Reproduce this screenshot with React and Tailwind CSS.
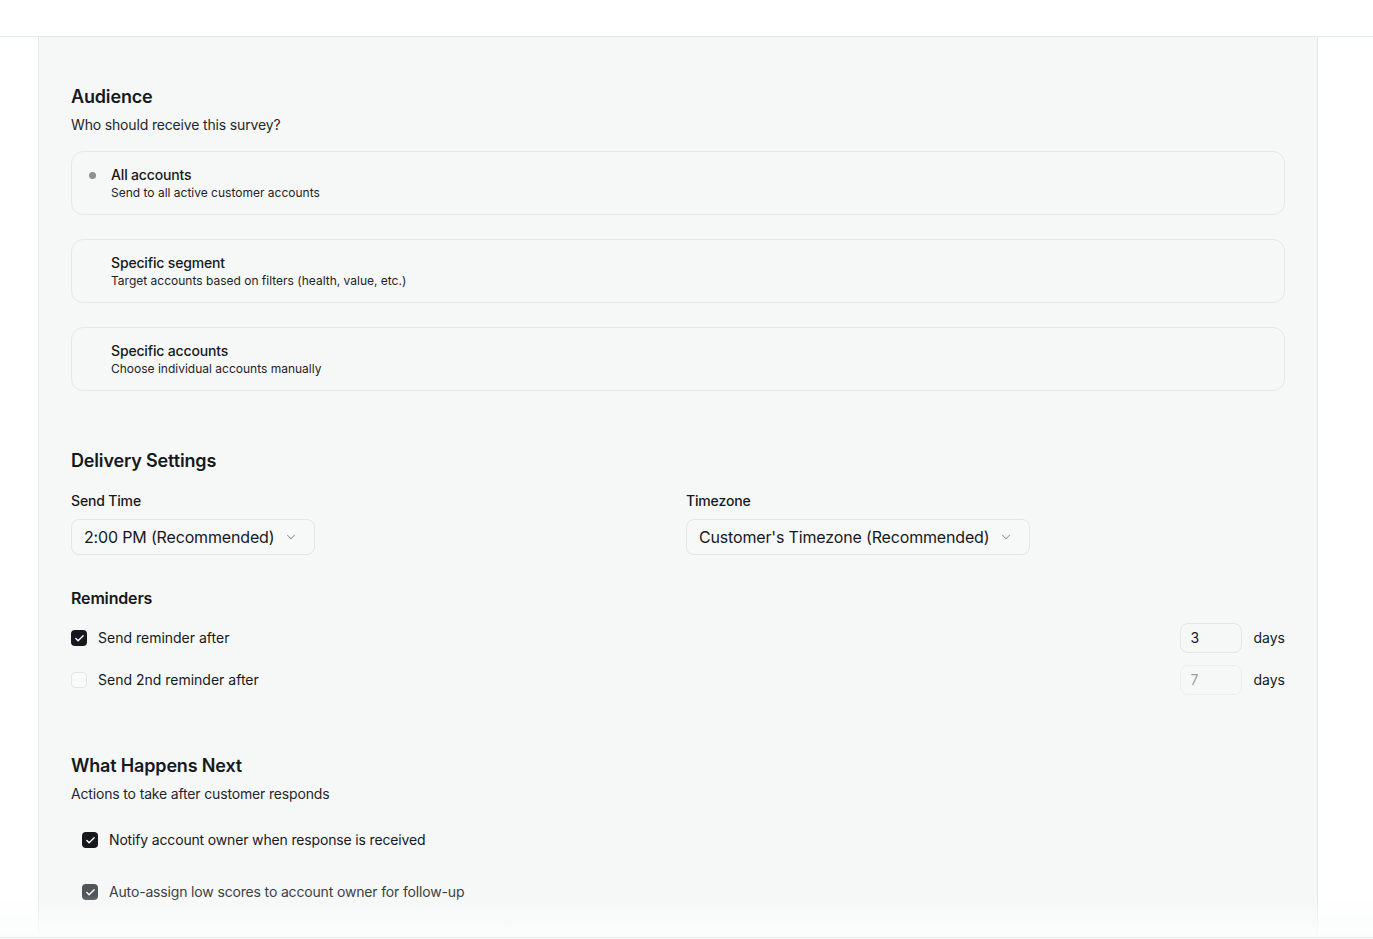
import React from "react";
import { Check, ChevronDown } from "lucide-react";

const audienceOptions = [
  {
    title: "All accounts",
    desc: "Send to all active customer accounts",
    selected: true,
  },
  {
    title: "Specific segment",
    desc: "Target accounts based on filters (health, value, etc.)",
  },
  {
    title: "Specific accounts",
    desc: "Choose individual accounts manually",
  },
];

const Checkbox = ({ checked, muted }) => {
  if (!checked) {
    return (
      <span className="w-4 h-4 shrink-0 rounded-[4px] border border-[#e1e5e8] bg-[#f8fafa]"></span>
    );
  }
  return (
    <span
      className={
        "w-4 h-4 shrink-0 rounded-[4px] flex items-center justify-center " +
        (muted ? "bg-[#50555b]" : "bg-[#15181c]")
      }
    >
      <Check size={11} strokeWidth={3} className="text-white" />
    </span>
  );
};

const Select = ({ value }) => (
  <div className="inline-flex items-center gap-2.5 h-9 pl-3 pr-4 rounded-lg border border-[#e1e6e9] bg-[#f7f9f9] text-base tracking-[-0.01em] text-[#15181c]">
    <span>{value}</span>
    <ChevronDown size={14} strokeWidth={1.75} className="text-[#8b9096]" />
  </div>
);

const ReminderRow = ({ checked, label, days }) => (
  <div className="flex items-center h-[30px]">
    <Checkbox checked={checked} />
    <span className="ml-[11px] text-sm tracking-normal text-[#15181c]">{label}</span>
    <div className="ml-auto flex items-center gap-3">
      <div
        className={
          "w-[62px] h-[30px] rounded-lg pl-[10px] flex items-center text-sm " +
          (checked
            ? "border border-[#e1e6e9] text-[#15181c]"
            : "border border-dotted border-[#e1e6e9] text-[#9a9ea3]")
        }
      >
        {days}
      </div>
      <span className="text-sm tracking-normal text-[#15181c]">days</span>
    </div>
  </div>
);

const App = () => {
  return (
    <div className="min-h-screen bg-white font-['Inter',sans-serif] tracking-[-0.01em] text-[#15181c]">
      <header className="h-[37px] border-b border-[#e3e8eb] bg-white"></header>

      <main className="ml-[38px] w-[1280px] bg-[#f6f8f8] border-x border-[#e3e7ea] px-8 pt-[46px] pb-24">
        {/* Audience */}
        <section>
          <h2 className="text-lg leading-7 font-semibold">Audience</h2>
          <p className="mt-1 text-sm leading-5 text-[#23272b]">
            Who should receive this survey?
          </p>
          <div className="mt-4 space-y-6">
            {audienceOptions.map((opt) => (
              <div
                key={opt.title}
                className="flex items-start gap-[11px] pl-3 py-[13px] rounded-xl border border-[#e3e8eb]"
              >
                <span className="w-4 h-4 mt-0.5 shrink-0 flex items-center justify-center">
                  {opt.selected && (
                    <span className="w-[7px] h-[7px] rounded-full bg-[#8c9095]"></span>
                  )}
                </span>
                <div>
                  <div className="text-sm leading-5 font-medium">{opt.title}</div>
                  <div className="text-xs leading-4 tracking-normal text-[#1e2226]">{opt.desc}</div>
                </div>
              </div>
            ))}
          </div>
        </section>

        {/* Delivery Settings */}
        <section className="mt-14">
          <h2 className="text-lg leading-7 font-semibold">Delivery Settings</h2>
          <div className="mt-4 grid grid-cols-2 gap-4">
            <div>
              <label className="block text-sm leading-5 font-medium">Send Time</label>
              <div className="mt-2">
                <Select value="2:00 PM (Recommended)" />
              </div>
            </div>
            <div>
              <label className="block text-sm leading-5 font-medium">Timezone</label>
              <div className="mt-2">
                <Select value="Customer's Timezone (Recommended)" />
              </div>
            </div>
          </div>

          <h3 className="mt-[31px] text-base leading-6 font-semibold">Reminders</h3>
          <div className="mt-[13px] flex flex-col gap-3">
            <ReminderRow checked label="Send reminder after" days="3" />
            <ReminderRow label="Send 2nd reminder after" days="7" />
          </div>
        </section>

        {/* What Happens Next */}
        <section className="mt-[57px]">
          <h2 className="text-lg leading-7 font-semibold">What Happens Next</h2>
          <p className="mt-1 text-sm leading-5 text-[#23272b]">
            Actions to take after customer responds
          </p>
          <div className="mt-[26px] pl-[11px] flex flex-col gap-8">
            <div className="flex items-center h-5">
              <Checkbox checked />
              <span className="ml-[11px] text-sm">
                Notify account owner when response is received
              </span>
            </div>
            <div className="flex items-center h-5">
              <Checkbox checked muted />
              <span className="ml-[11px] text-sm text-[#3a3e43]">
                Auto-assign low scores to account owner for follow-up
              </span>
            </div>
            <div className="ml-[184px] w-[86px] h-8 rounded-lg border border-[#e3e8eb]"></div>
          </div>
        </section>
      </main>

      {/* sticky footer fade */}
      <div className="fixed inset-x-0 bottom-0 pointer-events-none">
        <div className="h-[42px] bg-gradient-to-b from-transparent to-[#fbfcfc]"></div>
        <div className="h-[2px] border-t border-[#e6eaec] bg-white"></div>
      </div>
    </div>
  );
};

export default App;
